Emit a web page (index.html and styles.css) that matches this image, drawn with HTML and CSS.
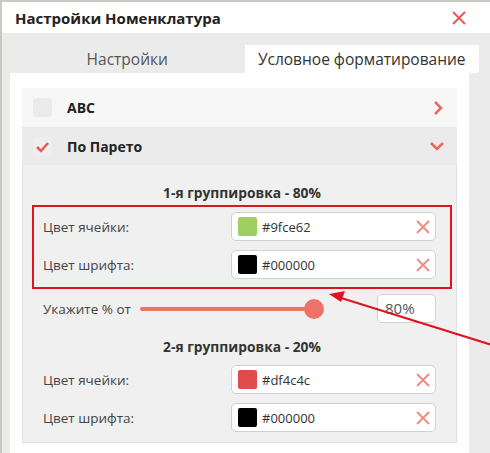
FILE: index.html
```html
<!DOCTYPE html>
<html>
<head>
  <title>Настройки Номенклатура</title>
  <link rel="stylesheet" href="styles.css">
</head>
<body>
  <div class="dialog">
    <div class="dialog-header">
      <h2>Настройки Номенклатура</h2>
      <svg class="close" width="16" height="16" viewBox="0 0 16 16"><path d="M2 2L14 14M14 2L2 14"/></svg>
    </div>

    <div class="dialog-body">
      <div class="tabs">
        <div class="tab">Настройки</div>
        <div class="tab active">Условное форматирование</div>
      </div>

      <div class="panel">
        <div class="acc-item">
          <div class="acc-head">
            <span class="check"></span>
            <span class="acc-title">ABC</span>
            <svg class="chev" width="14" height="16" viewBox="0 0 14 16"><path d="M4 2L10 8L4 14"/></svg>
          </div>
        </div>

        <div class="acc-item open">
          <div class="acc-head">
            <span class="check"><svg width="19" height="19" viewBox="0 0 19 19"><path d="M4 10L8 14L15 6"/></svg></span>
            <span class="acc-title">По Парето</span>
            <svg class="chev" width="16" height="12" viewBox="0 0 16 12"><path d="M2 3L8 9L14 3"/></svg>
          </div>

          <div class="acc-body">
            <div class="group-title">1-я группировка - 80%</div>
            <div class="fields boxed">
              <div class="field">
                <label>Цвет ячейки:</label>
                <div class="color-input">
                  <span class="swatch" style="background: #9fce62;"></span>
                  <span class="value">#9fce62</span>
                  <svg class="clear" width="14" height="14" viewBox="0 0 14 14"><path d="M1 1L13 13M13 1L1 13"/></svg>
                </div>
              </div>
              <div class="field">
                <label>Цвет шрифта:</label>
                <div class="color-input">
                  <span class="swatch" style="background: #000000;"></span>
                  <span class="value">#000000</span>
                  <svg class="clear" width="14" height="14" viewBox="0 0 14 14"><path d="M1 1L13 13M13 1L1 13"/></svg>
                </div>
              </div>
            </div>

            <div class="slider-row">
              <label class="slider-label">Укажите % от</label>
              <div class="slider"><span class="thumb"></span></div>
              <div class="percent">80%</div>
            </div>

            <div class="group-title second">2-я группировка - 20%</div>
            <div class="fields">
              <div class="field">
                <label>Цвет ячейки:</label>
                <div class="color-input">
                  <span class="swatch" style="background: #df4c4c;"></span>
                  <span class="value">#df4c4c</span>
                  <svg class="clear" width="14" height="14" viewBox="0 0 14 14"><path d="M1 1L13 13M13 1L1 13"/></svg>
                </div>
              </div>
              <div class="field">
                <label>Цвет шрифта:</label>
                <div class="color-input">
                  <span class="swatch" style="background: #000000;"></span>
                  <span class="value">#000000</span>
                  <svg class="clear" width="14" height="14" viewBox="0 0 14 14"><path d="M1 1L13 13M13 1L1 13"/></svg>
                </div>
              </div>
            </div>
          </div>
        </div>
      </div>
    </div>

    <svg class="pointer" width="490" height="453" viewBox="0 0 490 453">
      <line x1="492" y1="345" x2="338" y2="297"/>
      <polygon points="329,294 345,291 341,302"/>
    </svg>
  </div>
</body>
</html>
```

FILE: styles.css
```css
body {
  margin: 0;
  font-family: 'Open Sans', 'Noto Sans', sans-serif;
  color: #333;
  background: #ebebeb;
}

.dialog {
  position: relative;
  width: 488px;
  height: 451px;
  border-top: 2px solid #c9c9c1;
  border-left: 2px solid #c9c9c1;
  background: #ebebeb;
  overflow: hidden;
}

.dialog-header {
  height: 31px;
  background: #fff;
  display: flex;
  align-items: center;
  justify-content: space-between;
  padding: 0 23px 0 13px;
}

.dialog-header h2 {
  margin: 0;
  font-size: 15px;
  font-weight: bold;
  color: #222;
}

.close path {
  stroke: #e8594f;
  stroke-width: 2;
  fill: none;
}

.dialog-body {
  padding: 12px 0 0 8px;
}

.tabs {
  display: flex;
  width: 469px;
}

.tab {
  flex: 1;
  height: 28px;
  line-height: 28px;
  text-align: center;
  font-size: 15.5px;
  color: #555;
}

.tab.active {
  background: #fff;
  color: #333;
}

.panel {
  width: 435px;
  height: 380px;
  background: #fff;
  padding: 15px 12px 0 12px;
}

.acc-head {
  display: flex;
  align-items: center;
  height: 39px;
  padding: 0 12px 0 11px;
  background: #f7f7f7;
}

.acc-item.open .acc-head {
  height: 38px;
  background: #ebebeb;
}

.check {
  width: 19px;
  height: 19px;
  border-radius: 3px;
  background: #ebebeb;
  margin-right: 15px;
}

.acc-item.open .check {
  background: #eeeeee;
}

.check path {
  stroke: #e8594f;
  stroke-width: 2.5;
  fill: none;
}

.acc-title {
  flex: 1;
  font-size: 14px;
  font-weight: bold;
  color: #222;
}

.chev path {
  stroke: #e8665a;
  stroke-width: 2.5;
  fill: none;
}

.acc-body {
  background: #f0f0f0;
  border: 1px solid #e0e0e0;
  border-top: none;
  height: 277px;
  padding: 0 4px 0 9px;
}

.group-title {
  text-align: center;
  font-size: 13.8px;
  font-weight: bold;
  color: #333;
  padding: 18px 0 3px 0;
}

.group-title.second {
  padding: 13px 0 2px 0;
}

.fields {
  border: 2px solid transparent;
  padding: 5px 14px 8px 9px;
  display: flex;
  flex-direction: column;
  gap: 9px;
}

.fields.boxed {
  border-color: #e0141e;
}

.field {
  display: flex;
  align-items: center;
  justify-content: space-between;
}

label {
  font-size: 13.5px;
  color: #444;
}

.color-input {
  height: 27px;
  border: 1px solid #d0d0d0;
  border-radius: 5px;
  background: #fff;
  display: flex;
  align-items: center;
  padding: 0 5px 0 6px;
  width: 192px;
}

.swatch {
  width: 19px;
  height: 19px;
  border-radius: 2px;
  margin-right: 5px;
}

.value {
  flex: 1;
  font-size: 13px;
  color: #333;
}

.clear path {
  stroke: #f08a80;
  stroke-width: 1.8;
  fill: none;
}

.slider-row {
  display: flex;
  align-items: center;
  padding: 4px 16px 0 11px;
  height: 31px;
}

.slider-label {
  width: 97px;
}

.slider {
  position: relative;
  width: 174px;
  height: 4px;
  border-radius: 2px;
  background: #ef7268;
}

.thumb {
  position: absolute;
  right: -10px;
  top: -8px;
  width: 20px;
  height: 20px;
  border-radius: 50%;
  background: #ef7268;
}

.percent {
  margin-left: auto;
  width: 50px;
  height: 27px;
  line-height: 27px;
  border: 1px solid #d0d0d0;
  border-radius: 5px;
  background: #fff;
  font-size: 15px;
  color: #555;
  padding-left: 7px;
}

.pointer {
  position: absolute;
  left: -2px;
  top: -2px;
}

.pointer line {
  stroke: #e0141e;
  stroke-width: 2;
}

.pointer polygon {
  fill: #e0141e;
}
```
